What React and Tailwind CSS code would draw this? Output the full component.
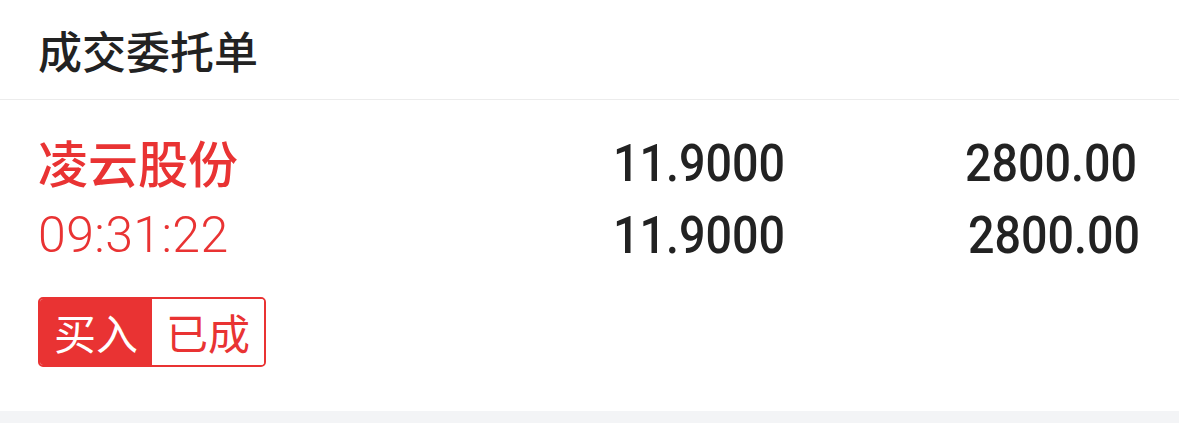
const RED = 'text-[#e93333]'

const rows = [
  { left: '凌云股份', price: '11.9000', amount: '2800.00', cjk: true, pr: 'pr-[42px]' },
  { left: '09:31:22', price: '11.9000', amount: '2800.00', cjk: false, pr: 'pr-[39px]' },
]

export default function App() {
  return (
    <div className="w-[1179px] h-[436px] bg-white flex flex-col font-['Roboto','Noto_Sans_CJK_SC',sans-serif]">
      <div className="h-[100px] border-b border-[#ececec] flex items-center pl-[38px]">
        <h2 className="text-[44px] leading-none font-medium text-[#222] font-['Noto_Sans_CJK_SC',sans-serif]">成交委托单</h2>
      </div>

      <div className="pt-[27px] flex flex-col">
        {rows.map((r, i) => (
          <div key={i} className="h-[72px] flex items-center">
            <div className="w-[613px] pl-[38px]">
              {r.cjk ? (
                <span className={`text-[50px] leading-none font-medium ${RED} font-['Noto_Sans_CJK_SC',sans-serif]`}>{r.left}</span>
              ) : (
                <span className={`text-[50px] leading-none font-light tracking-[0.4px] ${RED} font-['Roboto',sans-serif]`}>{r.left}</span>
              )}
            </div>
            <div className="flex-1">
              <span className="inline-block origin-left scale-x-[0.915] text-[51px] leading-none font-medium text-[#222]">{r.price}</span>
            </div>
            <div className={`text-right ${r.pr}`}>
              <span className="inline-block origin-right scale-x-[0.915] text-[51px] leading-none font-medium text-[#222]">{r.amount}</span>
            </div>
          </div>
        ))}
      </div>

      <div className="mt-[26px] ml-[38px] flex h-[70px] w-[228px] rounded-[5px] border-2 border-[#e93333] overflow-hidden font-['Noto_Sans_CJK_SC',sans-serif]">
        <div className="w-[112px] bg-[#e93333] text-white flex items-center justify-center text-[42px] leading-none">买入</div>
        <div className={`flex-1 bg-white ${RED} flex items-center justify-center text-[42px] leading-none`}>已成</div>
      </div>

      <div className="mt-[44px] h-[12px] bg-[#f3f4f6]" />
    </div>
  )
}
